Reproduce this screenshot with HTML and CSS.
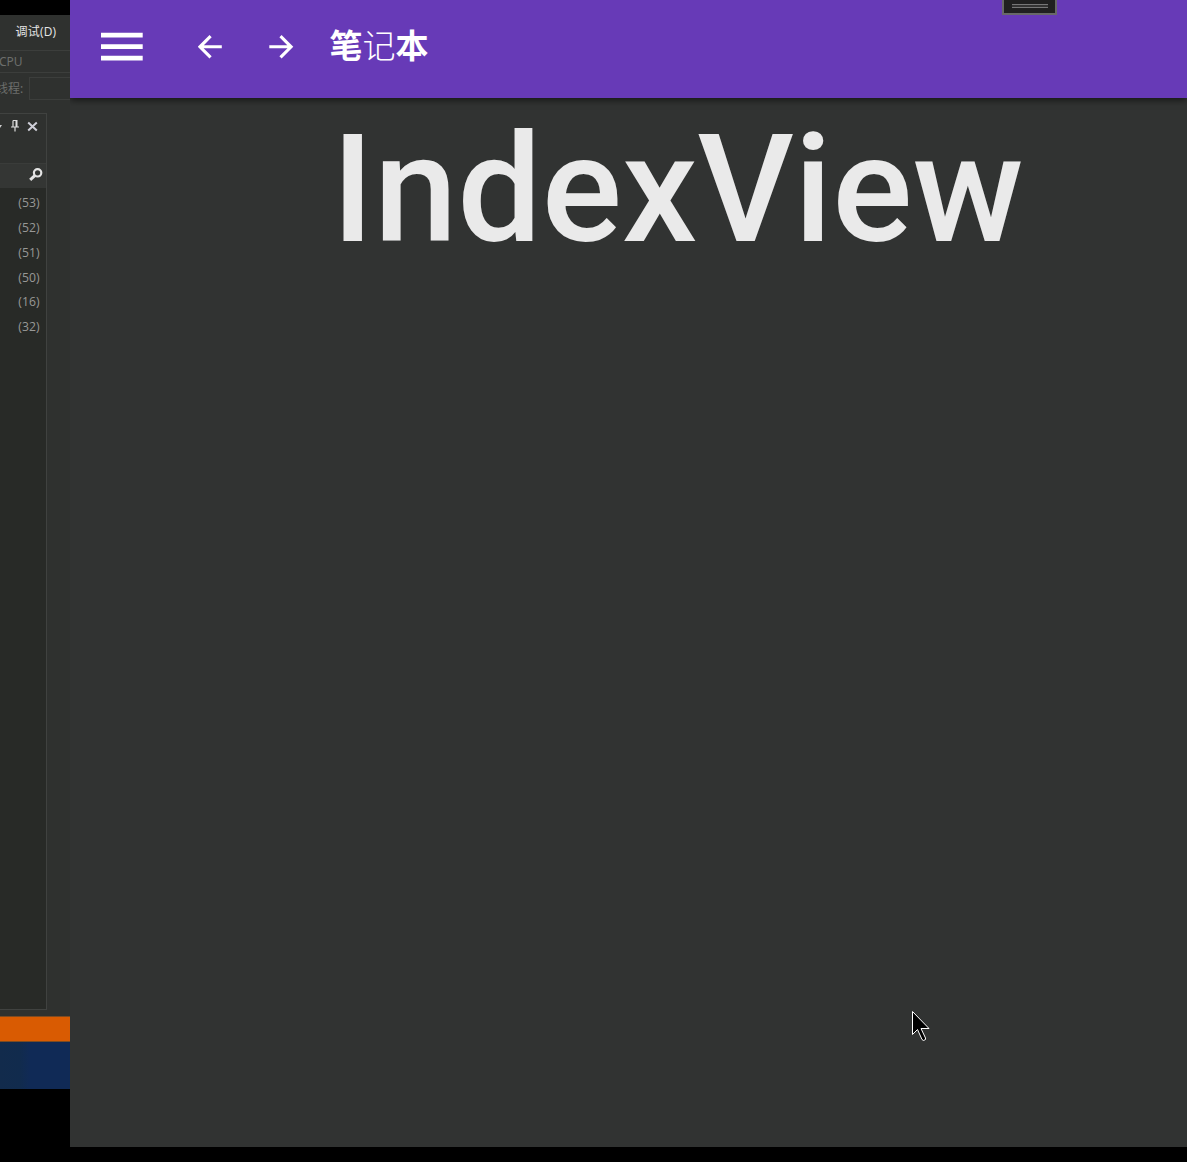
FILE: index.html
```html
<!DOCTYPE html>
<html lang="zh-CN">
<head>
<meta charset="utf-8">
<title>笔记本</title>
<link rel="stylesheet" href="styles.css">
</head>
<body>
<div class="screen">
  <aside class="ide">
    <div class="menu">调试(D)</div>
    <div class="toolbar"><span class="cpu">CPU</span></div>
    <div class="threads"><span class="label">线程:</span><span class="combo"></span></div>
    <section class="panel">
      <div class="panel-head">
        <svg class="drop" width="4" height="4" viewBox="0 0 4 4"><path d="M-2 0h4l-2 3z" fill="#ccc"/></svg>
        <svg class="pin" width="10" height="14" viewBox="0 0 10 14"><path d="M3 1.5v6M3 1.5h4M1 8h8M5 8v4.5" fill="none" stroke="#ddd" stroke-width="1.2"/><path d="M6.5 1v7" stroke="#ddd" stroke-width="2"/></svg>
        <svg class="close" width="11" height="11" viewBox="0 0 11 11"><path d="M1.2 1.5l8.6 8M9.8 1.5l-8.6 8" stroke="#cfcfd8" stroke-width="2"/></svg>
      </div>
      <div class="search">
        <svg width="14" height="14" viewBox="0 0 14 14"><circle cx="8.6" cy="4.8" r="3.7" fill="none" stroke="#e4e4e4" stroke-width="2.2"/><path d="M6 7.4L1.2 11.9" stroke="#e4e4e4" stroke-width="3"/></svg>
      </div>
      <ul class="counts"><li>(53)</li><li>(52)</li><li>(51)</li><li>(50)</li><li>(16)</li><li>(32)</li></ul>
    </section>
    <div class="status"></div>
    <div class="taskbar"></div>
  </aside>
  <main class="app">
    <header class="appbar">
      <svg class="burger" width="43" height="30" viewBox="0 0 43 30"><path d="M0 3.2h41.7M0 14.7h41.7M0 26.2h41.7" stroke="#fff" stroke-width="4.7"/></svg>
      <svg class="arrow back" width="25" height="25" viewBox="0 0 25 25"><path d="M23.8 12.8H3M12.6 2.2L2 12.8l10.6 10.6" fill="none" stroke="#fff" stroke-width="3.1"/></svg>
      <svg class="arrow next" width="25" height="25" viewBox="0 0 25 25"><path d="M.3 12.8H21.3M11.5 2.2l10.6 10.6-10.6 10.6" fill="none" stroke="#fff" stroke-width="3.1"/></svg>
      <h1 class="title">笔<span class="light">记</span>本</h1>
      <div class="grip"><span></span></div>
    </header>
    <div class="view">IndexView</div>
  </main>
  <svg class="cursor" width="20" height="32" viewBox="0 0 20 32"><path d="M1.5 1.5v23l5-5 4.5 10 1.5 1 2-1v-1.5l-4.5-9.5h8z" fill="#000" stroke="#fff"/></svg>
</div>
</body>
</html>
```
FILE: styles.css
```css
* { box-sizing: border-box; }
body { margin: 0; background: #000; }
svg { display: block; flex: none; }
.screen {
  position: relative;
  display: flex;
  width: 1187px;
  height: 1162px;
  overflow: hidden;
  background: #000;
}
.ide {
  display: flex;
  flex-direction: column;
  width: 70px;
  height: 1089px;
  padding-top: 15px;
  background: linear-gradient(#000 15px, #2f312f 15px);
  font: 12px/16px "Noto Sans", "Noto Sans CJK SC", sans-serif;
  color: #6c6e6c;
}
.menu {
  height: 35px;
  padding: 9px 0 0 15.5px;
  color: #e6e6e6;
  font: 12px/16px "Open Sans", "Noto Sans CJK SC", sans-serif;
  letter-spacing: .2px;
  white-space: nowrap;
}
.toolbar {
  height: 23px;
  padding-top: 3px;
  border-top: 1px solid #3c3e3c;
  border-bottom: 1px solid #3c3e3c;
}
.cpu { margin-left: -1px; }
.threads {
  display: flex;
  height: 40px;
  padding-top: 4px;
  white-space: nowrap;
}
.label { width: 33px; margin: 4px 0 0 -4px; }
.combo {
  flex: 1;
  height: 23px;
  border: 1px solid #3c3e3c;
  border-right: 0;
}
.panel {
  width: 47px;
  height: 897px;
  border: 1px solid #404240;
  border-left: 0;
  background: #282a27;
}
.panel-head {
  display: flex;
  align-items: flex-start;
  height: 49px;
  padding-top: 5px;
  background: #2f312f;
}
.drop { margin-top: 6px; }
.pin { margin-left: 6px; }
.close { margin: 2px 0 0 7px; }
.search {
  height: 25px;
  padding: 4px 0 0 28.5px;
  border-top: 1px solid #3a3c3a;
  background: #343634;
}
.counts {
  margin: 0;
  padding: 3px 6.5px 0 0;
  list-style: none;
  text-align: right;
  font: 12.2px/24.85px "Open Sans", "Noto Sans", sans-serif;
  color: #989896;
}
.status {
  height: 26px;
  margin-top: 6px;
  border: solid #7d4b22;
  border-width: 1px 0;
  background: #d95b02;
}
.taskbar {
  flex: 1;
  background: linear-gradient(90deg, #122b4c, #112b4d 20px, #102a56 30px, #102a56);
}
.app {
  width: 1117px;
  height: 1147px;
  background: #313332;
}
.appbar {
  position: relative;
  display: flex;
  align-items: flex-start;
  height: 98px;
  background: #673ab7;
  box-shadow: 0 2px 7px rgba(0, 0, 0, .6);
  clip-path: inset(0 0 -12px 0);
}
.burger { margin: 32px 0 0 31px; }
.arrow { margin-top: 34px; }
.back { margin-left: 54px; }
.next { margin-left: 46px; }
.title {
  margin: 20px 0 0 35.5px;
  font: 700 33px/48px "Noto Sans CJK SC", sans-serif;
  color: #fff;
}
.light { font-weight: 300; }
.grip {
  position: absolute;
  top: 0;
  left: 932px;
  width: 55px;
  height: 15px;
  padding: 4px 8px;
  border: 2px solid #686868;
  border-top: 0;
  background: #202020;
}
.grip span {
  display: block;
  width: 36px;
  height: 4px;
  border: solid #777;
  border-width: 1px 0;
  background: #333;
}
.view {
  padding: 4px 0 0 261.5px;
  font: 500 149.8px/176px Roboto, sans-serif;
  color: #eaeaea;
}
.cursor {
  position: absolute;
  left: 911px;
  top: 1010px;
}
```
